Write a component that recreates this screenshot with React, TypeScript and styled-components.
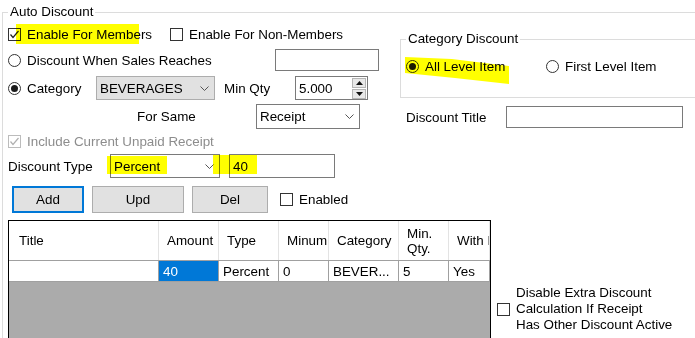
import React from 'react';
import styled, { createGlobalStyle, css } from 'styled-components';

const GlobalStyle = createGlobalStyle`
  html, body {
    margin: 0;
    padding: 0;
    background: #fff;
    overflow: hidden;
  }

  body {
    font-family: "Liberation Sans", Arial, sans-serif;
    font-size: 13.4px;
    line-height: 15px;
    color: #000;
  }
`;

const Page = styled.div`
  width: 695px;
  height: 338px;
  overflow: hidden;
`;

const GroupBox = styled.fieldset`
  box-sizing: border-box;
  margin: 4px 0 0 2px;
  padding: 4px 0 0 5px;
  border: 1px solid #dcdcdc;
  width: 760px;
  height: 420px;
  min-width: 0;
`;

const Legend = styled.legend`
  padding: 0 2px;
  line-height: 16px;
`;

const TopArea = styled.div`
  display: flex;
`;

const LeftForm = styled.div`
  width: 392px;
  display: grid;
  grid-template-rows: 20px 32px 24px 32px 18px 32px 34px;
`;

const Row = styled.div<{ $pl?: number }>`
  display: flex;
  align-items: center;
  padding-left: ${p => p.$pl ?? 0}px;
`;

const Option = styled.label<{ $w?: number; $ml?: number; $disabled?: boolean }>`
  display: inline-flex;
  align-items: center;
  gap: 6px;
  flex: none;
  width: ${p => (p.$w ? `${p.$w}px` : 'auto')};
  margin-left: ${p => p.$ml ?? 0}px;
  color: ${p => (p.$disabled ? '#8d8d8d' : '#000')};
  white-space: nowrap;
`;

const Label = styled.span<{ $w?: number; $ml?: number }>`
  flex: none;
  width: ${p => (p.$w ? `${p.$w}px` : 'auto')};
  margin-left: ${p => p.$ml ?? 0}px;
  white-space: nowrap;
`;

const CheckBox = styled.span<{ $disabled?: boolean }>`
  box-sizing: border-box;
  width: 13px;
  height: 13px;
  flex: none;
  border: 1px solid ${p => (p.$disabled ? '#bcbcbc' : '#333')};
  background: #fff;
  display: flex;
  align-items: center;
  justify-content: center;
`;

const Radio = styled.span<{ $checked?: boolean }>`
  box-sizing: border-box;
  width: 13px;
  height: 13px;
  flex: none;
  border: 1px solid #333;
  border-radius: 50%;
  background: #fff;
  display: flex;
  align-items: center;
  justify-content: center;

  &::after {
    content: '';
    width: 7px;
    height: 7px;
    border-radius: 50%;
    background: ${p => (p.$checked ? '#1a1a1a' : 'transparent')};
  }
`;

const Mark = styled.span<{ $x: number; $y: number; $w: number; $h: number; $swoosh?: boolean }>`
  position: relative;
  display: inline-flex;
  align-items: center;
  gap: 6px;

  &::before {
    content: '';
    position: absolute;
    left: ${p => p.$x}px;
    top: ${p => p.$y}px;
    width: ${p => p.$w}px;
    height: ${p => p.$h}px;
    background: #ffff00;
    mix-blend-mode: multiply;
    pointer-events: none;
    ${p =>
      p.$swoosh &&
      css`
        clip-path: polygon(0 0, 45% 2px, 100% 9px, 100% 100%, 48% 21px, 0 16px);
      `}
  }
`;

const TextBox = styled.div<{ $w: number; $h: number; $ml?: number }>`
  box-sizing: border-box;
  flex: none;
  width: ${p => p.$w}px;
  height: ${p => p.$h}px;
  margin-left: ${p => p.$ml ?? 0}px;
  border: 1px solid #7a7a7a;
  background: #fff;
  display: flex;
  align-items: center;
  padding-left: 3px;
`;

const ComboBox = styled.div<{ $w: number; $h: number; $flat?: boolean }>`
  box-sizing: border-box;
  flex: none;
  width: ${p => p.$w}px;
  height: ${p => p.$h}px;
  border: 1px solid ${p => (p.$flat ? '#adadad' : '#7a7a7a')};
  background: ${p => (p.$flat ? '#e1e1e1' : '#fff')};
  display: flex;
  align-items: center;
  justify-content: space-between;
  padding: 0 5px 0 3px;
`;

const NumericBox = styled(TextBox)`
  justify-content: space-between;
  padding-right: 1px;
`;

const Spin = styled.div`
  display: flex;
  flex-direction: column;
  gap: 1px;
  width: 14px;
`;

const SpinButton = styled.div`
  box-sizing: border-box;
  height: 10px;
  border: 1px solid #b5b5b5;
  background: #e8e8e8;
  display: flex;
  align-items: center;
  justify-content: center;
`;

const Button = styled.button<{ $w: number; $focused?: boolean }>`
  box-sizing: border-box;
  width: ${p => p.$w}px;
  height: 27px;
  flex: none;
  margin: 0;
  padding: 0;
  font: inherit;
  color: #000;
  background: #e1e1e1;
  border: ${p => (p.$focused ? '2px solid #0078d7' : '1px solid #adadad')};
`;

const ButtonRow = styled(Row)`
  gap: 8px;
`;

const RightForm = styled.div`
  display: flex;
  flex-direction: column;
`;

const CategoryGroup = styled.fieldset`
  box-sizing: border-box;
  margin: 7px 0 0 0;
  padding: 9px 0 21px 5px;
  border: 1px solid #dcdcdc;
  width: 320px;
  min-width: 0;
`;

const GroupRow = styled.div`
  display: flex;
  align-items: center;
  height: 20px;
`;

const TitleRow = styled(Row)`
  height: 24px;
  margin-top: 7px;
`;

const BottomArea = styled.div`
  display: flex;
  align-items: flex-start;
  margin-top: 4px;
`;

const DataGrid = styled.div`
  box-sizing: border-box;
  width: 483px;
  height: 140px;
  flex: none;
  border: 1px solid #000;
  background: #ababab;
  overflow: hidden;
`;

const columns = '150px 60px 60px 50px 70px 50px 41px';

const HeaderRow = styled.div`
  display: grid;
  grid-template-columns: ${columns};
  height: 39px;
  background: #fff;
  border-bottom: 1px solid #a0a0a0;
`;

const HeaderCell = styled.div<{ $pl?: number }>`
  display: flex;
  align-items: center;
  padding-left: ${p => p.$pl ?? 8}px;
  border-right: 1px solid #e3e3e3;
  white-space: nowrap;
  overflow: hidden;
`;

const DataRow = styled.div`
  display: grid;
  grid-template-columns: ${columns};
  height: 20px;
  background: #fff;
  border-bottom: 1px solid #a0a0a0;
`;

const DataCell = styled.div<{ $selected?: boolean }>`
  display: flex;
  align-items: center;
  padding-left: 4px;
  border-right: 1px solid #a0a0a0;
  white-space: nowrap;
  overflow: hidden;
  background: ${p => (p.$selected ? '#0078d7' : '#fff')};
  color: ${p => (p.$selected ? '#fff' : '#000')};
`;

const SideOption = styled.label`
  display: flex;
  align-items: center;
  gap: 6px;
  margin: 65px 0 0 6px;
  line-height: 16px;
`;

const Tick: React.FC<{ color?: string }> = ({ color = '#222' }) => (
  <svg width="11" height="11" viewBox="0 0 11 11">
    <polyline points="1.5,5.5 4,8.5 9.5,2" fill="none" stroke={color} strokeWidth="1.2" />
  </svg>
);

const Chevron = () => (
  <svg width="9" height="5" viewBox="0 0 9 5">
    <polyline points="0.5,0.5 4.5,4.5 8.5,0.5" fill="none" stroke="#555" strokeWidth="1" />
  </svg>
);

const Arrow: React.FC<{ down?: boolean }> = ({ down }) => (
  <svg width="7" height="4" viewBox="0 0 7 4">
    <polygon points={down ? '0,0 7,0 3.5,4' : '0,4 7,4 3.5,0'} fill="#111" />
  </svg>
);

interface GridRow {
  title: string;
  amount: string;
  type: string;
  minimum: string;
  category: string;
  minQty: string;
  withReceipt: string;
}

const rows: GridRow[] = [
  { title: '', amount: '40', type: 'Percent', minimum: '0', category: 'BEVER...', minQty: '5', withReceipt: 'Yes' },
];

const App: React.FC = () => {
  return (
    <Page>
      <GlobalStyle />
      <GroupBox>
        <Legend>Auto Discount</Legend>
        <TopArea>
          <LeftForm>
            <Row>
              <Option $w={162}>
                <CheckBox>
                  <Tick />
                </CheckBox>
                <span>
                  <Mark $x={-11} $y={-2.5} $w={123} $h={20}>Enable For Membe</Mark>rs
                </span>
              </Option>
              <Option>
                <CheckBox />
                <span>Enable For Non-Members</span>
              </Option>
            </Row>

            <Row>
              <Option $w={267}>
                <Radio />
                <span>Discount When Sales Reaches</span>
              </Option>
              <TextBox $w={104} $h={22} />
            </Row>

            <Row>
              <Option $w={88}>
                <Radio $checked />
                <span>Category</span>
              </Option>
              <ComboBox $w={119} $h={24} $flat>
                <span>BEVERAGES</span>
                <Chevron />
              </ComboBox>
              <Label $w={71} $ml={9}>Min Qty</Label>
              <NumericBox $w={73} $h={24}>
                <span>5.000</span>
                <Spin>
                  <SpinButton>
                    <Arrow />
                  </SpinButton>
                  <SpinButton>
                    <Arrow down />
                  </SpinButton>
                </Spin>
              </NumericBox>
            </Row>

            <Row $pl={129}>
              <Label $w={119}>For Same</Label>
              <ComboBox $w={104} $h={25}>
                <span>Receipt</span>
                <Chevron />
              </ComboBox>
            </Row>

            <Row>
              <Option $disabled>
                <CheckBox $disabled>
                  <Tick color="#b0b0b0" />
                </CheckBox>
                <span>Include Current Unpaid Receipt</span>
              </Option>
            </Row>

            <Row>
              <Label $w={102}>Discount Type</Label>
              <ComboBox $w={110} $h={24}>
                <Mark $x={-7} $y={-3} $w={60} $h={18}>Percent</Mark>
                <Chevron />
              </ComboBox>
              <TextBox $w={106} $h={24} $ml={9}>
                <Mark $x={-20} $y={-4} $w={44} $h={19}>40</Mark>
              </TextBox>
            </Row>

            <ButtonRow $pl={4}>
              <Button $w={72} $focused>Add</Button>
              <Button $w={92}>Upd</Button>
              <Button $w={76}>Del</Button>
              <Option $ml={4}>
                <CheckBox />
                <span>Enabled</span>
              </Option>
            </ButtonRow>
          </LeftForm>

          <RightForm>
            <CategoryGroup>
              <Legend>Category Discount</Legend>
              <GroupRow>
                <Option $w={140}>
                  <Mark $x={-1} $y={-1.5} $w={104} $h={27} $swoosh>
                    <Radio $checked />
                    <span>All Level Item</span>
                  </Mark>
                </Option>
                <Option>
                  <Radio />
                  <span>First Level Item</span>
                </Option>
              </GroupRow>
            </CategoryGroup>
            <TitleRow $pl={6}>
              <Label $w={100}>Discount Title</Label>
              <TextBox $w={177} $h={22} />
            </TitleRow>
          </RightForm>
        </TopArea>

        <BottomArea>
          <DataGrid>
            <HeaderRow>
              <HeaderCell $pl={10}>Title</HeaderCell>
              <HeaderCell>Amount</HeaderCell>
              <HeaderCell>Type</HeaderCell>
              <HeaderCell>Minumum Sales</HeaderCell>
              <HeaderCell>Category</HeaderCell>
              <HeaderCell>
                Min.
                <br />
                Qty.
              </HeaderCell>
              <HeaderCell>With Receipt</HeaderCell>
            </HeaderRow>
            {rows.map((r, i) => (
              <DataRow key={i}>
                <DataCell>{r.title}</DataCell>
                <DataCell $selected>{r.amount}</DataCell>
                <DataCell>{r.type}</DataCell>
                <DataCell>{r.minimum}</DataCell>
                <DataCell>{r.category}</DataCell>
                <DataCell>{r.minQty}</DataCell>
                <DataCell>{r.withReceipt}</DataCell>
              </DataRow>
            ))}
          </DataGrid>
          <SideOption>
            <CheckBox />
            <span>
              Disable Extra Discount
              <br />
              Calculation If Receipt
              <br />
              Has Other Discount Active
            </span>
          </SideOption>
        </BottomArea>
      </GroupBox>
    </Page>
  );
};

export default App;
